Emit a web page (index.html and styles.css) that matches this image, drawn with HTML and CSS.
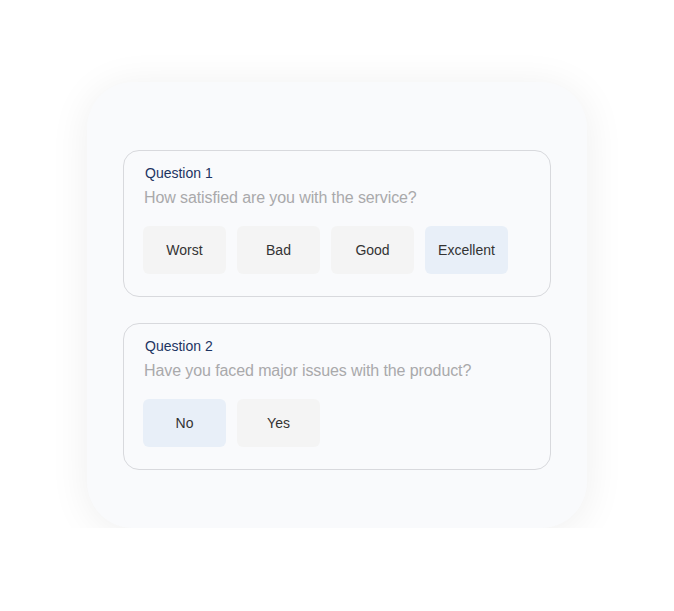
FILE: index.html
```html
<!DOCTYPE html>
<html lang="en">
<head>
<meta charset="utf-8">
<title>Survey</title>
<link rel="stylesheet" href="styles.css">
</head>
<body>
<main class="panel">
  <section class="question">
    <div class="q-label">Question 1</div>
    <div class="q-text">How satisfied are you with the service?</div>
    <div class="options">
      <button class="opt">Worst</button>
      <button class="opt">Bad</button>
      <button class="opt">Good</button>
      <button class="opt selected">Excellent</button>
    </div>
  </section>
  <section class="question">
    <div class="q-label">Question 2</div>
    <div class="q-text">Have you faced major issues with the product?</div>
    <div class="options">
      <button class="opt selected">No</button>
      <button class="opt">Yes</button>
    </div>
  </section>
</main>
</body>
</html>
```
FILE: styles.css
```css
html, body {
  margin: 0;
  padding: 0;
  background: #ffffff;
}
body {
  padding-top: 82px;
  font-family: "Liberation Sans", Arial, sans-serif;
}
.panel {
  width: 500px;
  margin: 0 auto;
  box-sizing: border-box;
  padding: 68px 36px 58px 36px;
  background: #f9fafc;
  border-radius: 46px;
  box-shadow: 0 4px 40px rgba(0, 0, 0, 0.07);
  display: flex;
  flex-direction: column;
  gap: 26px;
}
.question {
  border: 1px solid #d8d9dd;
  border-radius: 16px;
  padding: 13px 20px 22px 19px;
  background: #f9fafc;
}
.q-label {
  font-size: 14px;
  line-height: 18px;
  color: #1d3462;
  padding-left: 2px;
}
.q-text {
  margin-top: 5px;
  font-size: 16px;
  line-height: 22px;
  color: #a9a9ab;
  padding-left: 1px;
  letter-spacing: -0.1px;
}
.options {
  margin-top: 17px;
  display: flex;
  gap: 11px;
}
.opt {
  width: 83px;
  height: 48px;
  border: none;
  border-radius: 6px;
  background: #f4f4f4;
  color: #333333;
  font-family: inherit;
  font-size: 14px;
  padding: 0;
}
.opt.selected {
  background: #e8eff8;
}
```
